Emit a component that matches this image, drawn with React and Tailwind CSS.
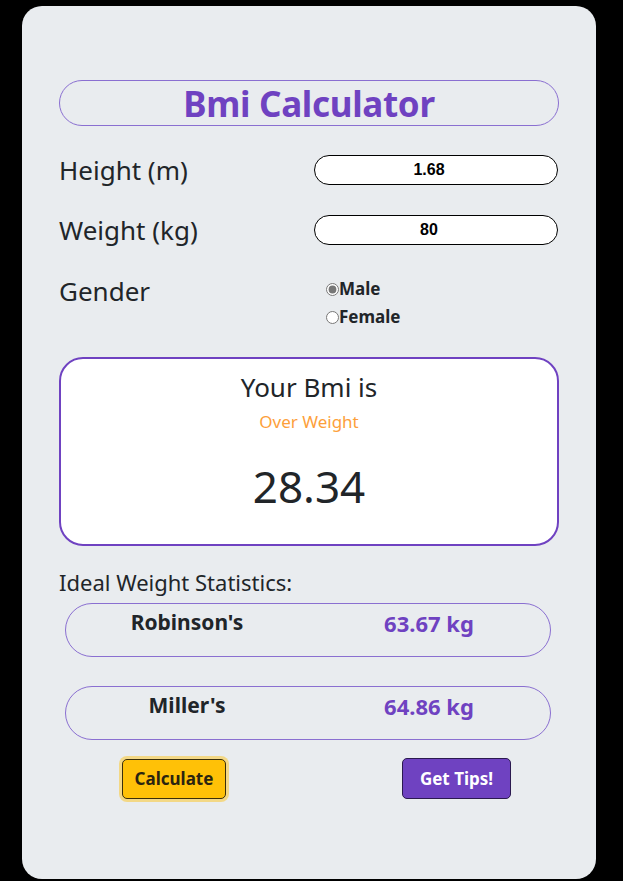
import { useState } from "react";

function StatRow({ name, value }) {
  return (
    <div className="grid grid-cols-2 h-[54px] border border-[#8a6fd1] rounded-full ml-[6px] w-[486px] pt-[3px]">
      <div className="text-center text-[21px] font-bold text-[#212529]">{name}</div>
      <div className="text-center text-[22px] font-bold text-[#6f42c1]">{value}</div>
    </div>
  );
}

export default function App() {
  const [gender, setGender] = useState("male");

  return (
    <div className="min-h-[881px] bg-black pt-[6px] pl-[22px] font-['Noto_Sans','Open_Sans',sans-serif]">
      <div className="w-[574px] h-[873px] bg-[#e9ecef] rounded-[20px] px-[37px] pt-[74px]">
        <div className="h-[46px] border border-[#8a6fd1] rounded-full flex items-center justify-center">
          <h1 className="text-[35px] font-bold text-[#6f42c1] leading-none tracking-[-0.3px]">Bmi Calculator</h1>
        </div>

        <div className="grid grid-cols-[255px_244px] mt-[29px] items-center">
          <label className="text-[26px] text-[#212529] h-[30px] flex items-center">Height (m)</label>
          <input
            type="text"
            defaultValue="1.68"
            className="h-[30px] w-full bg-white border border-black rounded-full text-center pr-[14px] text-[16px] font-bold font-['Liberation_Sans',sans-serif] outline-none"
          />
        </div>

        <div className="grid grid-cols-[255px_244px] mt-[30px] items-center">
          <label className="text-[26px] text-[#212529] h-[30px] flex items-center">Weight (kg)</label>
          <input
            type="text"
            defaultValue="80"
            className="h-[30px] w-full bg-white border border-black rounded-full text-center pr-[14px] text-[16px] font-bold font-['Liberation_Sans',sans-serif] outline-none"
          />
        </div>

        <div className="grid grid-cols-[267px_232px] mt-[31px]">
          <label className="text-[26px] text-[#212529] leading-[30px]">Gender</label>
          <div className="flex flex-col -mt-[1px] text-[17px] font-bold text-[#212529] leading-[28px]">
            <label className="flex items-center">
              <input
                type="radio"
                name="gender"
                checked={gender === "male"}
                onChange={() => setGender("male")}
                className="w-[13px] h-[13px] m-0 accent-[#777]"
              />
              Male
            </label>
            <label className="flex items-center">
              <input
                type="radio"
                name="gender"
                checked={gender === "female"}
                onChange={() => setGender("female")}
                className="w-[13px] h-[13px] m-0"
              />
              Female
            </label>
          </div>
        </div>

        <div className="mt-[26px] h-[189px] bg-white border-2 border-[#6f42c1] rounded-[24px] flex flex-col items-center pt-[10px]">
          <div className="text-[26px] text-[#212529] leading-[36px]">Your Bmi is</div>
          <div className="text-[17px] text-[#fd9f3b] mt-[5px] leading-[24px]">Over Weight</div>
          <div className="text-[44px] text-[#212529] mt-[24px] leading-[56px]">28.34</div>
        </div>

        <div className="text-[22px] text-[#212529] mt-[21px] leading-[30px]">Ideal Weight Statistics:</div>

        <div className="mt-[6px]">
          <StatRow name="Robinson's" value="63.67 kg" />
        </div>
        <div className="mt-[29px]">
          <StatRow name="Miller's" value="64.86 kg" />
        </div>

        <div className="flex items-center mt-[18px] pl-[63px]">
          <button className="w-[104px] h-[40px] bg-[#ffc107] border border-[#3a2e0a] rounded-[5px] text-[17px] font-bold text-[#2a2410] shadow-[0_0_0_3px_rgba(255,193,7,0.45)]">
            Calculate
          </button>
          <button className="ml-[176px] w-[109px] h-[41px] bg-[#6f42c1] border border-[#2b1a4f] rounded-[5px] text-[17px] font-bold text-white">
            Get Tips!
          </button>
        </div>
      </div>
    </div>
  );
}
